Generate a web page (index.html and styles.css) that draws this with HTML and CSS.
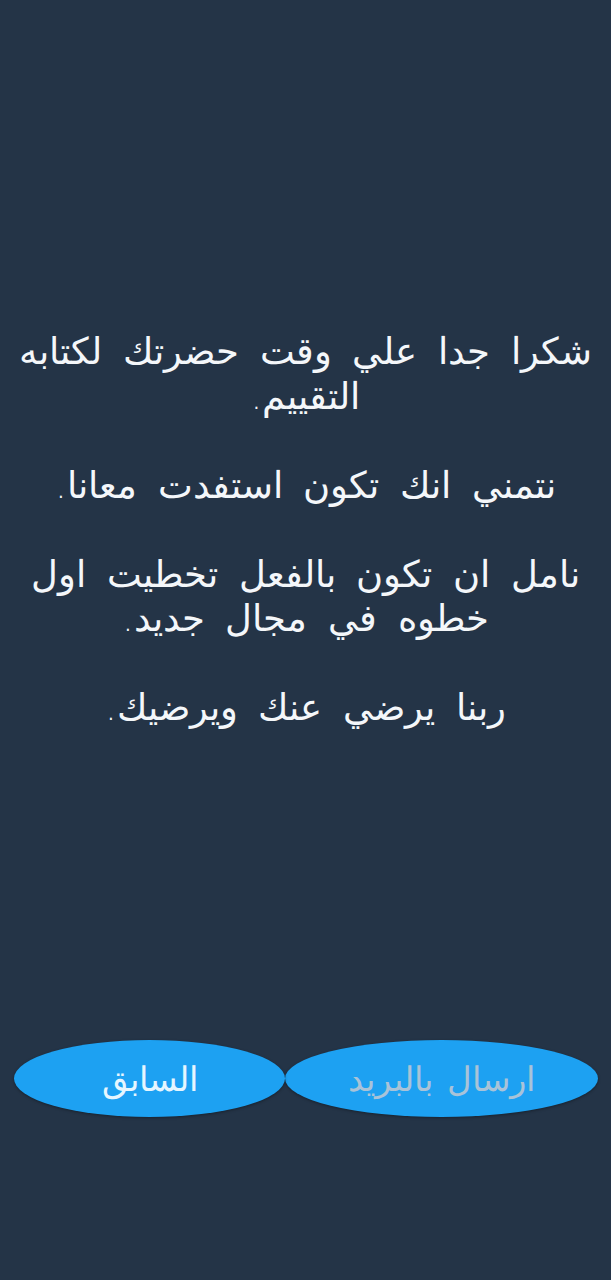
FILE: index.html
```html
<!DOCTYPE html>
<html lang="ar" dir="rtl">
<head>
<meta charset="utf-8">
<link rel="stylesheet" href="styles.css">
</head>
<body>
<div class="screen">
  <div class="message">شكرا جدا علي وقت حضرتك لكتابه التقييم.

نتمني انك تكون استفدت معانا.

نامل ان تكون بالفعل تخطيت اول خطوه في مجال جديد.

ربنا يرضي عنك ويرضيك.</div>
  <div class="actions">
    <button class="btn btn-send">ارسال بالبريد</button>
    <button class="btn btn-prev">السابق</button>
  </div>
</div>
</body>
</html>
```
FILE: styles.css
```css
html, body {
  margin: 0;
  padding: 0;
  background: #243447;
}
.screen {
  width: 611px;
  height: 1280px;
  display: flex;
  flex-direction: column;
  font-family: "DejaVu Sans ExtraLight", "DejaVu Sans", sans-serif;
}
.message {
  white-space: pre-line;
  direction: rtl;
  text-align: center;
  color: #f4f7fa;
  font-size: 37px;
  font-weight: 200;
  line-height: 44.5px;
  word-spacing: 9px;
  padding: 330px 12px 0 12px;
  height: 710px;
  box-sizing: border-box;
}
.actions {
  display: flex;
  flex-direction: row;
  padding: 0 13px;
  padding-top: 330px;
}
.btn {
  height: 77px;
  border: none;
  border-radius: 50%;
  background: #1da1f2;
  font-family: "DejaVu Sans ExtraLight", "DejaVu Sans", sans-serif;
  font-size: 34px;
  font-weight: 200;
  word-spacing: 4px;
  padding: 0;
  box-shadow: 0 1px 3px rgba(0,0,0,0.35);
}
.btn-send {
  width: 313px;
  color: #a9c3d8;
}
.btn-prev {
  width: 271px;
  color: #e6f6ff;
}
```
